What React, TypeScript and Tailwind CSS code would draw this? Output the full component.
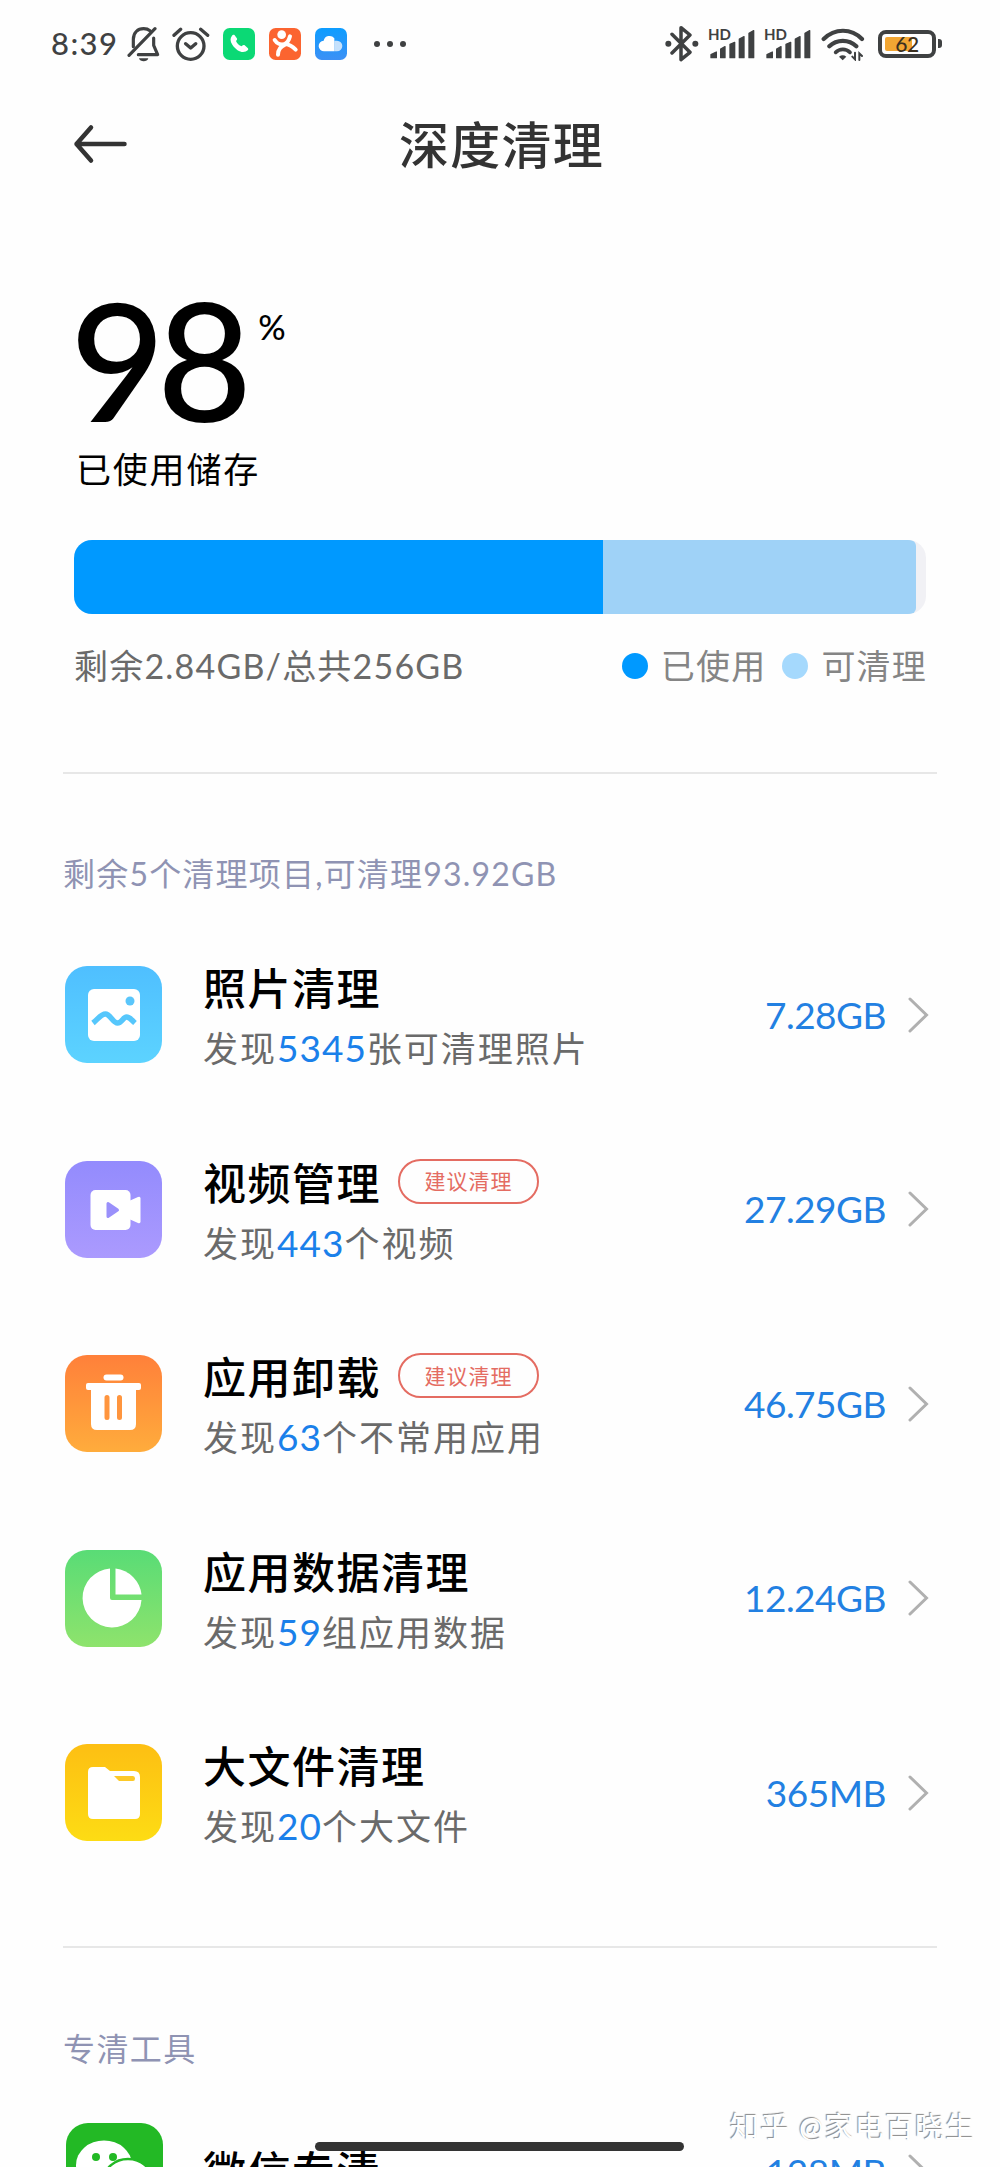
import type { ReactNode } from "react";

const INK = "#3f4142";

function BellOff() {
  return (
    <svg width="33" height="36" viewBox="0 0 99 108" fill="none" stroke={INK} strokeWidth="9.500" strokeLinecap="round" strokeLinejoin="round">
      <path d="M6 88 84 8" />
      <path d="M19 62V40C19 20 32 8 50 8c8 0 14 2 19 6" />
      <path d="M80 36v22l12 28H34" />
      <path d="M36 97h28c-2 7-7 9-14 9s-12-2-14-9Z" fill={INK} stroke="none" />
    </svg>
  );
}

function AlarmClock() {
  return (
    <svg width="38" height="36" viewBox="0 0 114 108" fill="none" stroke={INK} strokeWidth="10" strokeLinecap="round" strokeLinejoin="round">
      <circle cx="56" cy="60" r="40" />
      <path d="M6 28 26 10M86 10l21 18M41 53l15 13 15-13" />
    </svg>
  );
}

function PhoneApp() {
  return (
    <svg width="32" height="32" viewBox="0 0 96 96">
      <rect width="96" height="96" rx="20" fill="#0bd975" />
      <path d="M27 23c-6 7-6 16 1 27 9 14 22 22 32 22 6 0 11-2 15-6 1-2 1-4-1-6l-9-8c-3-2-6 0-9 3-8-2-14-9-17-16 3-3 5-6 2-9l-6-8c-2-2-6-2-8 1Z" fill="#fff" />
    </svg>
  );
}

function DianpingApp() {
  return (
    <svg width="32" height="32" viewBox="0 0 96 96" fill="none" stroke="#fff" strokeWidth="12" strokeLinecap="round" strokeLinejoin="round">
      <rect width="96" height="96" rx="20" fill="#fb6430" stroke="none" />
      <circle cx="38" cy="20" r="13" fill="#fff" stroke="none" />
      <path d="M17 36c6 10 18 15 28 13 10-3 15-12 18-24M48 50C34 56 27 66 27 80M50 48c14 2 22 9 30 17" />
    </svg>
  );
}

function CloudApp() {
  return (
    <svg width="32" height="32" viewBox="0 0 96 96">
      <defs>
        <linearGradient id="cloudBg" x1="0" y1="0" x2="0" y2="1">
          <stop offset="0" stopColor="#0d9dff" />
          <stop offset="1" stopColor="#3d90f5" />
        </linearGradient>
      </defs>
      <rect width="96" height="96" rx="20" fill="url(#cloudBg)" />
      <path d="M58 38h8a16 16 0 0 1 0 32h-8Z" fill="#c5e1fc" />
      <path d="M58 70H28a16 16 0 0 1-2-32 18 18 0 0 1 32-7Z" fill="#fff" />
    </svg>
  );
}

function Bluetooth() {
  return (
    <svg width="34" height="37" viewBox="0 0 102 111" fill="none" stroke={INK} strokeWidth="10.500" strokeLinecap="round" strokeLinejoin="round">
      <path d="m21 28 54 54-27 22V8l27 22-54 54" />
      <circle cx="10" cy="56" r="9" fill={INK} stroke="none" />
      <circle cx="91" cy="56" r="9" fill={INK} stroke="none" />
    </svg>
  );
}

function Signal() {
  return (
    <div className="relative h-[30px] w-[47px]">
      <span className="absolute -top-[3px] left-0 text-[15px] leading-[16px] font-bold">HD</span>
      <svg width="47" height="30" viewBox="0 0 141 90" fill={INK} stroke={INK} strokeWidth="4" strokeLinejoin="round">
        <path d="M9 86v-9l16-8v17ZM38 86V60l13-7v33ZM66 86V46l14-6v46ZM94 86V30l14-7v63ZM123 86V13l14-8v81Z" />
      </svg>
    </div>
  );
}

function Wifi() {
  return (
    <svg width="44" height="34" viewBox="0 0 132 102" fill="none" stroke={INK} strokeWidth="12.500" strokeLinecap="round">
      <path d="M8 36C41 3 91 3 123 36M25 58c22-22 59-22 81 0" />
      <path d="M44 76c12-12 31-12 43 0" strokeWidth="11" />
      <path d="M54 89q11-8 22 0L65 100Z" fill={INK} stroke="none" />
      <path d="M102 77v20l-8-8M115 99V79l8 8" strokeWidth="6" />
    </svg>
  );
}

function Battery() {
  return (
    <div className="flex items-center gap-[2px]">
      <div className="relative flex h-[28px] w-[58px] rounded-[8px] border-4 border-[#3f4142] p-[3px]">
        <div className="h-full w-[27px] rounded-[2px] bg-[#f2a633]" />
        <span className="absolute inset-0 text-center text-[21px] leading-[20px] font-medium tracking-[-0.5px] text-[#3b3020]">62</span>
      </div>
      <div className="h-[9px] w-1 rounded-r-[3px] bg-[#3f4142]" />
    </div>
  );
}

function StatusBar() {
  return (
    <div className="flex h-[87px] items-center justify-between pr-[58px] pl-[51px] text-[#3f4142]">
      <div className="flex items-center">
        <span className="w-[76px] text-[31px] leading-none font-medium tracking-[1.4px]">8:39</span>
        <BellOff />
        <div className="ml-[12px]"><AlarmClock /></div>
        <div className="ml-[13px] flex gap-[14px]">
          <PhoneApp />
          <DianpingApp />
          <CloudApp />
        </div>
        <div className="ml-[27px] flex gap-[7px]">
          <i className="size-[6px] rounded-full bg-[#3f4142]" />
          <i className="size-[6px] rounded-full bg-[#3f4142]" />
          <i className="size-[6px] rounded-full bg-[#3f4142]" />
        </div>
      </div>
      <div className="flex items-center">
        <Bluetooth />
        <div className="ml-[9px] flex gap-[9px]">
          <Signal />
          <Signal />
        </div>
        <div className="mr-[13px] ml-[10px]"><Wifi /></div>
        <Battery />
      </div>
    </div>
  );
}

function Tile({ id, from, to, children }: { id: string; from: string; to: string; children: ReactNode }) {
  return (
    <svg className="shrink-0" width="97" height="97" viewBox="0 0 97 97">
      <defs>
        <linearGradient id={id} x1="0" y1="0" x2="0" y2="1">
          <stop offset="0" stopColor={from} />
          <stop offset="1" stopColor={to} />
        </linearGradient>
      </defs>
      <rect width="97" height="97" rx="22" fill={`url(#${id})`} />
      {children}
    </svg>
  );
}

const items = [
  {
    title: "照片清理",
    before: "发现",
    count: "5345",
    after: "张可清理照片",
    size: "7.28GB",
    advised: false,
    icon: (
      <Tile id="photo" from="#4fbfff" to="#5cd3ff">
        <rect x="23" y="23" width="52" height="52" rx="6" fill="#fff" />
        <circle cx="65" cy="35" r="4.5" fill="#5ac6fb" />
        <path d="M28 57c5-4 8-9 12.500-9S48 57 52.500 57s5.500-6 9-6 5 3 8.500 6" fill="none" stroke="#56c7fc" strokeWidth="5.5" strokeLinejoin="round" />
      </Tile>
    ),
  },
  {
    title: "视频管理",
    before: "发现",
    count: "443",
    after: "个视频",
    size: "27.29GB",
    advised: true,
    icon: (
      <Tile id="video" from="#938bfd" to="#ab9afe">
        <rect x="25.500" y="29" width="40" height="40" rx="5" fill="#fff" />
        <path d="m64 40 9-4q2.500-1 2.500 1.500v23q0 2.500-2.500 1.500l-9-4Z" fill="#fff" />
        <path d="M43 42.500v13l9.500-6.500Z" fill="#9a90fb" stroke="#9a90fb" strokeWidth="3" strokeLinejoin="round" />
      </Tile>
    ),
  },
  {
    title: "应用卸载",
    before: "发现",
    count: "63",
    after: "个不常用应用",
    size: "46.75GB",
    advised: true,
    icon: (
      <Tile id="trash" from="#ff803a" to="#ffac3c">
        <rect x="38.500" y="19.500" width="20" height="6" rx="3" fill="#fff" />
        <rect x="21" y="28" width="55" height="7" rx="2" fill="#fff" />
        <path d="M26 32h45v37q0 6-6 6H32q-6 0-6-6Z" fill="#fff" />
        <path d="M42 42.500v20M54.500 42.500v20" stroke="#ff953e" strokeWidth="5" strokeLinecap="round" />
      </Tile>
    ),
  },
  {
    title: "应用数据清理",
    before: "发现",
    count: "59",
    after: "组应用数据",
    size: "12.24GB",
    advised: false,
    icon: (
      <Tile id="data" from="#59dc76" to="#8ee36c">
        <path d="M45 18.500A29.500 29.500 0 1 0 76.500 50H47q-2 0-2-2Z" fill="#fff" />
        <path d="M50.500 18.500A29.500 29.500 0 0 1 76.500 44.500H50.500Z" fill="#fff" />
      </Tile>
    ),
  },
  {
    title: "大文件清理",
    before: "发现",
    count: "20",
    after: "个大文件",
    size: "365MB",
    advised: false,
    icon: (
      <Tile id="files" from="#fdbf13" to="#fddc14">
        <path d="M28 23h12l5 4h24q6 0 6 6v37q0 5-5 5H28q-5 0-5-5V28q0-5 5-5Z" fill="#fff" />
        <path d="M49 32h19q2 0 2 2.500T68 37H54Z" fill="#fcc928" />
      </Tile>
    ),
  },
];

function WeChatTile() {
  return (
    <Tile id="wechat" from="#23b925" to="#23b925">
      <ellipse cx="38" cy="42" rx="28" ry="24.500" fill="#fff" />
      <circle cx="30" cy="34" r="4" fill="#23b925" />
      <circle cx="47" cy="34" r="4" fill="#23b925" />
      <ellipse cx="62" cy="57" rx="24" ry="21" fill="#fff" stroke="#23b925" strokeWidth="2.500" />
    </Tile>
  );
}

function Chevron() {
  return (
    <svg className="ml-[22px]" width="21" height="36" viewBox="0 0 21 36" fill="none" stroke="#b0b0b0" strokeWidth="3" strokeLinecap="round">
      <path d="m2 2 16.500 16L2 34" />
    </svg>
  );
}

function Size({ children }: { children: string }) {
  return (
    <div className="ml-auto flex h-[97px] items-center">
      <span className="text-[37px] leading-[48px] tracking-[-0.5px] text-[#2280e2]">{children}</span>
      <Chevron />
    </div>
  );
}

export default function App() {
  return (
    <main className="relative h-[2167px] w-[1000px] overflow-hidden bg-[#fefefe] font-['Lato','Noto_Sans_CJK_SC',sans-serif] text-black">
      <StatusBar />

      <header className="relative flex h-[116px] items-center justify-center">
        <svg className="absolute top-[37px] left-[72px]" width="57" height="40" viewBox="0 0 57 40" fill="none" stroke="#333" strokeWidth="4.500" strokeLinecap="round" strokeLinejoin="round">
          <path d="M19 3.500 4.500 20 19 36.500M4.500 20h48" />
        </svg>
        <h1 className="pl-[3px] text-[50px] leading-[60px] font-medium tracking-[1.3px] text-[#333]">深度清理</h1>
      </header>

      <section className="mx-[74px] mt-[74px]">
        <div className="-ml-[4px] flex">
          <span className="text-[164px] leading-[164px] font-medium tracking-[-8px]">98</span>
          <span className="mt-[26px] ml-[14px] text-[34px] leading-[48px] font-medium">%</span>
        </div>
        <p className="mt-1 ml-[2px] text-[35px] leading-[48px] tracking-[1.8px]">已使用储存</p>

        <div className="mt-[47px] flex h-[74px] overflow-hidden rounded-[18px] bg-[#f1f1f5]">
          <div className="w-[529px] bg-[#0099ff]" />
          <div className="w-[313px] rounded-r-[6px] bg-[#9fd2f7]" />
        </div>

        <div className="mt-[28px] flex h-[48px] items-center text-[34px] leading-[48px] tracking-[1.2px]">
          <span className="text-[#6a6a6a]">剩余2.84GB/总共256GB</span>
          <div className="-mr-px ml-auto flex items-center text-[#858585]">
            <i className="mr-[13px] size-[26px] rounded-full bg-[#0099ff]" />
            已使用
            <i className="mr-[13px] ml-[16px] size-[26px] rounded-full bg-[#a5d9fd]" />
            可清理
          </div>
        </div>
      </section>

      <section className="mx-[63px] mt-[82px] border-t-2 border-[#e7e7e7]">
        <h2 className="mt-[76px] text-[32px] leading-[48px] tracking-[1.2px] text-[#8f93b3]">剩余5个清理项目,可清理93.92GB</h2>
        <ul className="mt-[68px] mr-[8px] ml-[2px] space-y-[97.5px]">
          {items.map((item) => (
            <li key={item.title} className="flex h-[97px]">
              {item.icon}
              <div className="-mt-px ml-[41px]">
                <div className="flex h-[48px] items-center">
                  <h3 className="text-[43px] leading-[48px] font-medium tracking-[1.5px]">{item.title}</h3>
                  {item.advised && (
                    <span className="-mt-[5px] ml-[17px] flex h-[45px] w-[141px] items-center justify-center rounded-full border-[2.5px] border-[#e46c62] text-[21px] tracking-[1px] text-[#e46c62]">
                      建议清理
                    </span>
                  )}
                </div>
                <p className="mt-[11px] text-[35px] leading-[48px] tracking-[2px] text-[#6a6a6a]">
                  {item.before}
                  <span className="text-[37px] tracking-[1px] text-[#1a80ea]">{item.count}</span>
                  {item.after}
                </p>
              </div>
              <Size>{item.size}</Size>
            </li>
          ))}
        </ul>
      </section>

      <section className="mx-[63px] mt-[105px] border-t-2 border-[#e7e7e7]">
        <h2 className="mt-[77px] text-[32px] leading-[48px] tracking-[1.4px] text-[#8f93b3]">专清工具</h2>
        <div className="mt-[50px] mr-[8px] ml-[3px] flex h-[97px] items-center">
          <WeChatTile />
          <h3 className="ml-[40px] text-[43px] leading-[48px] font-medium tracking-[1.5px]">微信专清</h3>
          <Size>128MB</Size>
        </div>
      </section>

      <div className="absolute top-[2142px] left-[315px] h-[9px] w-[369px] rounded-full bg-[#333]" />
      <div className="absolute top-[2107px] left-[730px] text-[29px] leading-[40px] tracking-[1.2px] whitespace-nowrap text-white [text-shadow:-1px_-1px_1px_#888]">
        知乎 @家电百晓生
      </div>
    </main>
  );
}
